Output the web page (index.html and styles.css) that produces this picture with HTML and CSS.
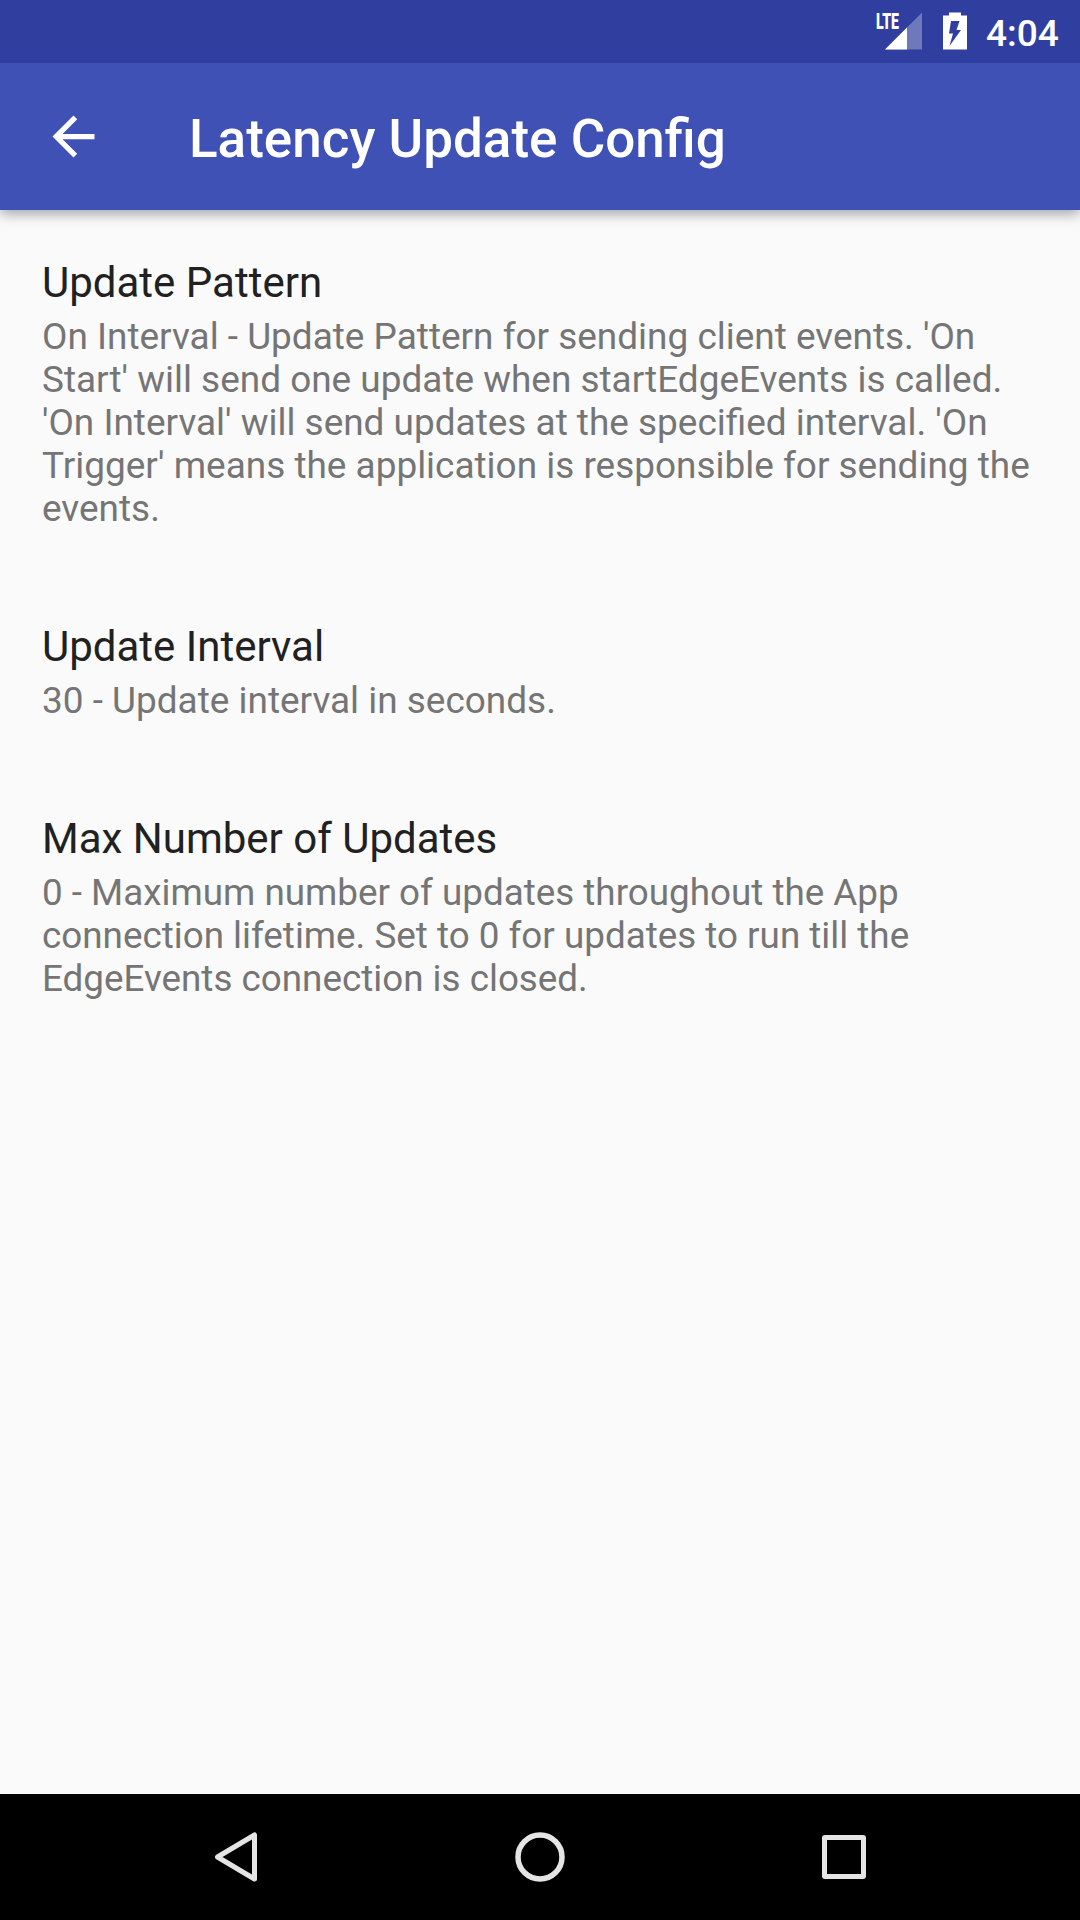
FILE: index.html
```html
<!DOCTYPE html>
<html lang="en">
<head>
<meta charset="utf-8">
<title>Latency Update Config</title>
<link rel="stylesheet" href="styles.css">
</head>
<body>
<div class="screen">
  <header class="status-bar">
    <div class="signal">
      <span class="network">LTE</span>
      <svg class="signal-icon" width="37" height="38" viewBox="0 0 37 38"><path d="M37 .5V37.500H0Z" fill="#fff" opacity=".3"/><path d="M22 15.500V37.500H0Z" fill="#fff"/></svg>
    </div>
    <svg class="battery-icon" width="24" height="38" viewBox="0 0 24 38"><path fill="#fff" fill-rule="evenodd" d="M6 .5H18V3.500H24V37.500H0V3.500H6ZM8 9L6 21.500H10L6.500 34L18 18H13.500L16.500 9Z"/></svg>
    <time class="clock">4:04</time>
  </header>
  <nav class="app-bar">
    <svg class="back-icon" width="63" height="63" viewBox="0 0 24 24"><path fill="#fff" d="M20 11H7.830l5.590-5.590L12 4l-8 8 8 8 1.410-1.410L7.830 13H20v-2z"/></svg>
    <h1 class="title">Latency Update Config</h1>
  </nav>
  <main class="preferences">
    <section class="preference">
      <h2 class="name">Update Pattern</h2>
      <p class="summary">On Interval - Update Pattern for sending client events. 'On<br>Start' will send one update when startEdgeEvents is called.<br>'On Interval' will send updates at the specified interval. 'On<br>Trigger' means the application is responsible for sending the<br>events.</p>
    </section>
    <section class="preference">
      <h2 class="name">Update Interval</h2>
      <p class="summary">30 - Update interval in seconds.</p>
    </section>
    <section class="preference">
      <h2 class="name">Max Number of Updates</h2>
      <p class="summary compact">0 - Maximum number of updates throughout the App<br>connection lifetime. Set to 0 for updates to run till the<br>EdgeEvents connection is closed.</p>
    </section>
  </main>
  <footer class="nav-bar">
    <svg class="nav-icon" viewBox="0 0 60 60"><path d="M48.500 8V52L11.500 30Z"/></svg>
    <svg class="nav-icon" viewBox="0 0 60 60"><circle cx="30" cy="30" r="22" stroke-width="5.500"/></svg>
    <svg class="nav-icon" viewBox="0 0 60 60"><rect x="10.500" y="10.500" width="39" height="39" rx=".5"/></svg>
  </footer>
</div>
</body>
</html>
```
FILE: styles.css
```css
* { box-sizing: border-box; }
body { margin: 0; font-family: Roboto, sans-serif; }
h1, h2, p { margin: 0; }
svg { display: block; flex: none; }
.screen { width: 1080px; height: 1920px; display: flex; flex-direction: column; background: #fafafa; overflow: hidden; }
.status-bar { height: 63px; flex: none; display: flex; justify-content: flex-end; padding: 12px 21px 0 0; background: #303f9f; color: #fff; }
.signal { display: flex; width: 46px; margin-right: 21px; }
.network { width: 9px; flex: none; font-size: 22px; line-height: 19px; font-weight: 900; transform: scaleX(.64); transform-origin: 0 0; }
.clock { margin-left: 19px; width: 73px; font-size: 37px; line-height: 43px; font-weight: 500; }
.app-bar { height: 147px; flex: none; display: flex; align-items: center; padding-left: 42px; background: #3f51b5; color: #fff; box-shadow: 0 4px 12px rgba(0,0,0,.35); clip-path: inset(0 0 -20px); }
.title { margin: 5px 0 0 84px; font-size: 53px; line-height: 62px; font-weight: 500; }
.preferences { flex: 1; padding: 48px 42px 0; }
.preference { margin-bottom: 92px; }
.name { font-size: 42px; line-height: 50px; font-weight: 400; color: #212121; }
.summary { margin-top: 7px; font-size: 36.950px; line-height: 43px; color: #757575; white-space: nowrap; }
.summary.compact { font-size: 36.800px; }
.nav-bar { height: 126px; flex: none; display: flex; align-items: center; justify-content: center; gap: 244px; background: #000; }
.nav-icon { width: 60px; height: 60px; fill: none; stroke: #e5e5e5; stroke-width: 5; stroke-linejoin: round; }
```
